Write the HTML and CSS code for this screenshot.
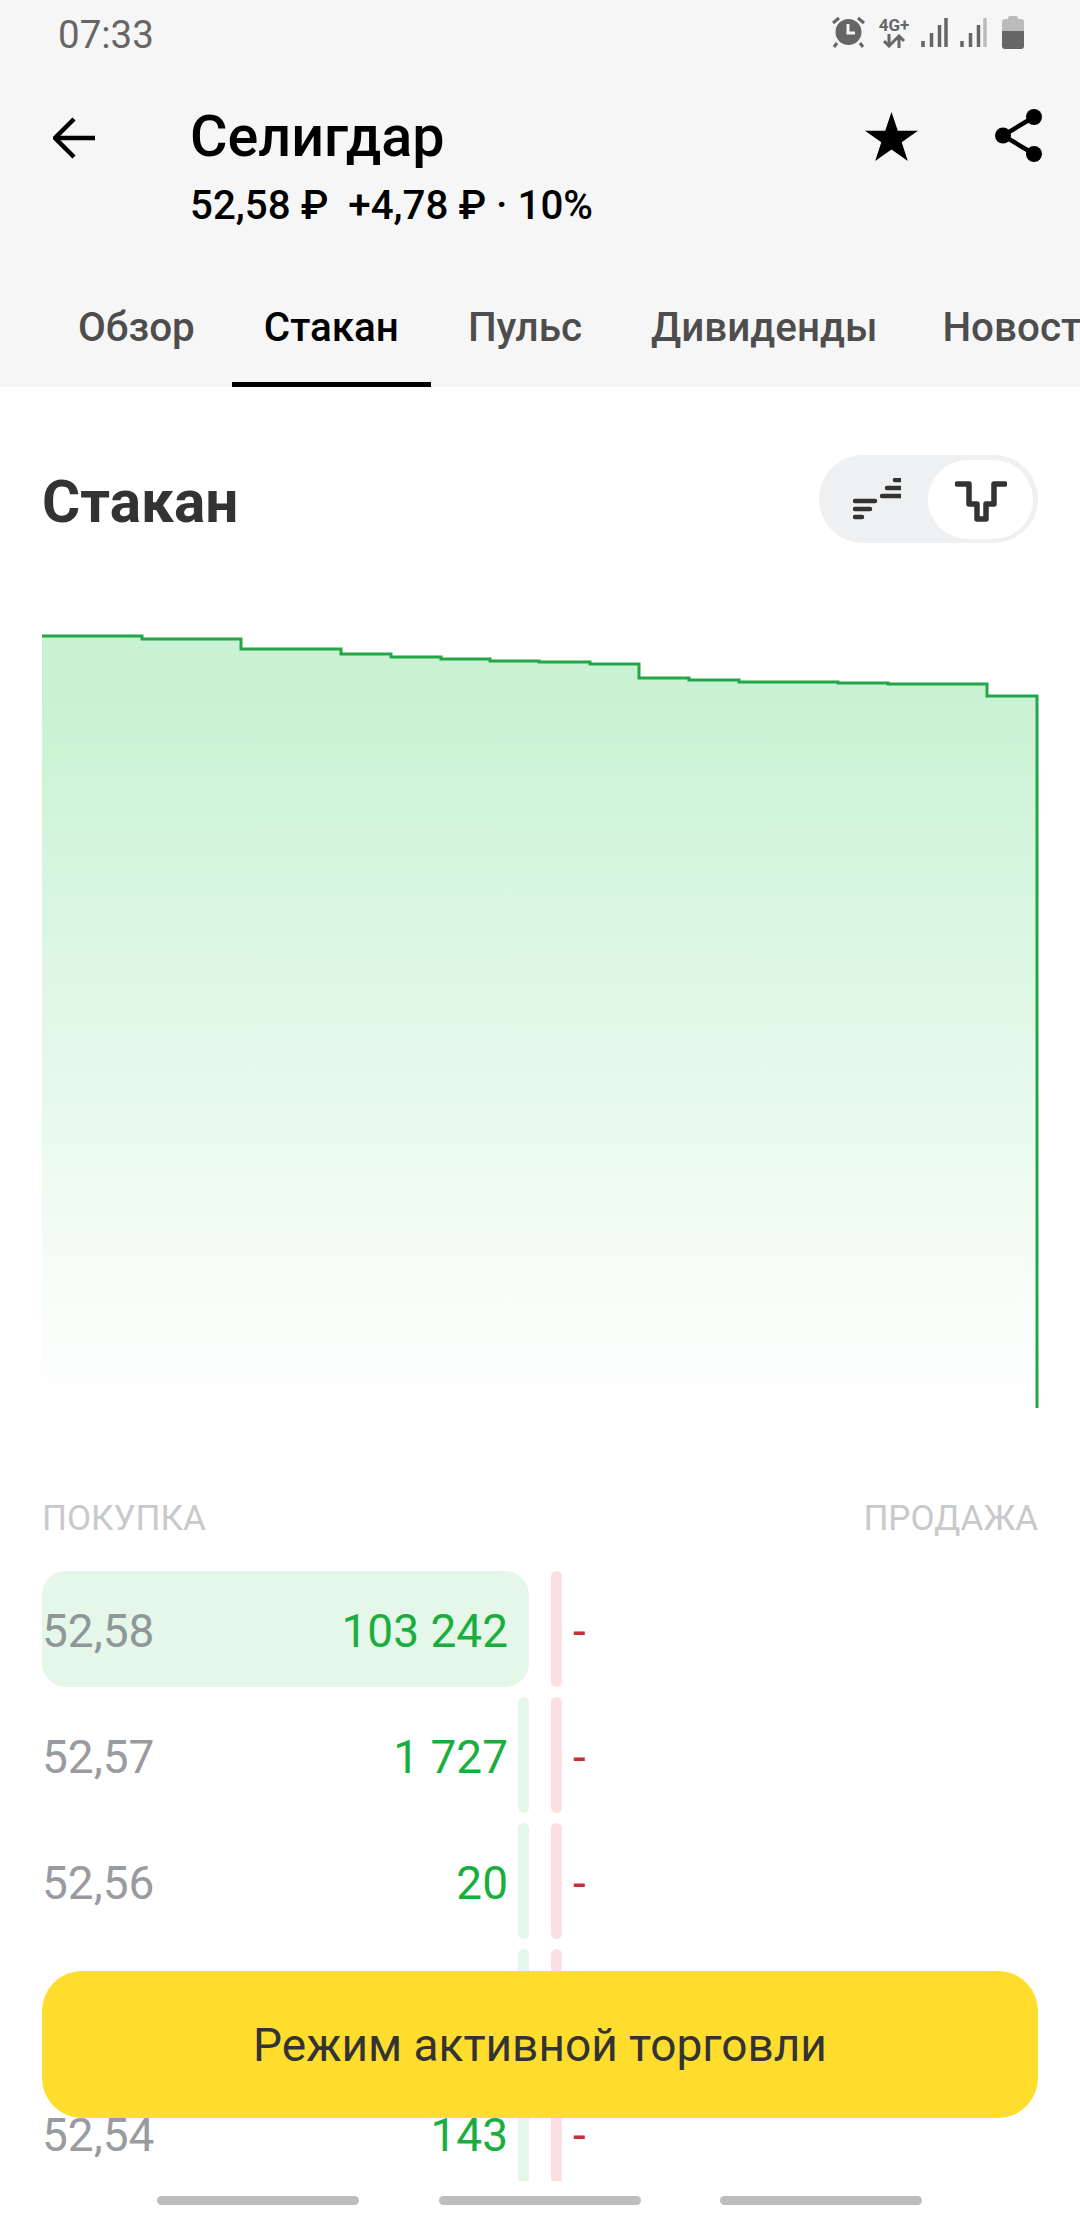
FILE: index.html
```html
<!DOCTYPE html>
<html lang="ru">
<head>
  <meta charset="UTF-8" />
  <meta name="viewport" content="width=device-width, initial-scale=1.0"/>
  <title>Селигдар</title>

  <link rel="stylesheet" href="styles.css">
</head>

<body>
  <div class="app">
    <header class="header">
      <div class="statusBar">
        <span class="time">07:33</span>
        <div class="statusIcons">
          <svg class="alarm" width="33" height="32" viewBox="0 0 33 32">
            <circle cx="16.5" cy="16" r="13" fill="#666"/>
            <path d="M16 8v9h7" fill="none" stroke="#f6f6f6" stroke-width="3"/>
            <path d="M1 7l6-5M32 7l-6-5M5 27l-3 4M28 27l3 4" fill="none" stroke="#666" stroke-width="3"/>
          </svg>
          <div class="network">
            <span class="networkLabel">4G+</span>
            <svg width="24" height="14" viewBox="0 0 24 14">
              <path d="M7 0v12M2 7l5 5 5-5M17 14V2M12 7l5-5 5 5" fill="none" stroke="#666" stroke-width="3"/>
            </svg>
          </div>
          <svg width="27" height="30" viewBox="0 0 27 30">
            <path d="M2 30v-6M10.500 30V16M18.500 30V8M25 30V1" fill="none" stroke="#666" stroke-width="3.500"/>
          </svg>
          <svg width="27" height="30" viewBox="0 0 27 30">
            <path d="M2 30v-6M10.500 30V16M18.500 30V8" fill="none" stroke="#666" stroke-width="3.500"/>
            <path d="M25 30V1" fill="none" stroke="#bbb" stroke-width="3.500"/>
          </svg>
          <svg class="battery" width="22" height="33" viewBox="0 0 22 33">
            <path d="M6 3q0-3 2-3h6q2 0 2 3h3q3 0 3 3v9H0V6q0-3 3-3z" fill="#bbb"/>
            <path d="M0 15h22v15q0 3-3 3H3q-3 0-3-3z" fill="#666"/>
          </svg>
        </div>
      </div>

      <div class="titleRow">
        <svg class="backIcon" width="42" height="42" viewBox="0 0 42 42">
          <path d="M42 21H3M21 2L2 21l19 19" fill="none" stroke="#000" stroke-width="4.500"/>
        </svg>
        <div class="titleText">
          <h1 class="title">Селигдар</h1>
          <div class="subtitle">52,58 ₽&nbsp; +4,78 ₽ · 10%</div>
        </div>
        <svg class="starIcon" width="53" height="49" viewBox="0 0 53 49">
          <path d="M26.500 0l6.300 18.700H53L36.700 30.300 42.800 49 26.500 37.500 10.200 49l6.100-18.700L0 18.700h20.200z" fill="#000"/>
        </svg>
        <svg class="shareIcon" width="47" height="53" viewBox="0 0 47 53">
          <circle cx="39" cy="8" r="8"/>
          <circle cx="8" cy="26.500" r="8"/>
          <circle cx="39" cy="45" r="8"/>
          <path d="M39 8L8 26.500 39 45" fill="none" stroke="#000" stroke-width="4.500"/>
        </svg>
      </div>

      <nav class="tabs">
        <a class="tab">Обзор</a>
        <a class="tab tabActive">Стакан</a>
        <a class="tab">Пульс</a>
        <a class="tab">Дивиденды</a>
        <a class="tab tabLast">Новости</a>
      </nav>
    </header>

    <main class="content">
      <div class="sectionHead">
        <h2 class="sectionTitle">Стакан</h2>
        <div class="toggle">
          <span class="toggleItem">
            <svg class="depthIcon" width="48" height="42" viewBox="0 0 48 42">
              <path d="M2 23h20M2 31h15M2 39h7M29 18h20M34 10h15M42 2h7" fill="none" stroke="#333" stroke-width="4.500" stroke-linecap="round"/>
            </svg>
          </span>
          <span class="toggleItem toggleKnob">
            <svg class="chartIcon" width="52" height="41" viewBox="0 0 52 41">
              <path d="M2 3h12v20h8v15h9V23h8V3h11" fill="none" stroke="#333" stroke-width="5.500" stroke-linecap="round" stroke-linejoin="round"/>
            </svg>
          </span>
        </div>
      </div>

      <svg class="chart" width="997" height="780" viewBox="0 0 997 780">
        <defs>
          <linearGradient id="depthFill" x1="0" y1="0" x2="0" y2="1">
            <stop offset="0.07" stop-color="#c8f2d3"/>
            <stop offset="1" stop-color="#ffffff"/>
          </linearGradient>
        </defs>
        <path fill="url(#depthFill)" d="M0 6H100V9H199V19H299V24H349V27H399V29H448V31H497V32H548V34H597V48H647V50H697V52H796V53H846V54H945V66H995V778H0Z"/>
        <path fill="none" stroke="#24a648" stroke-width="3" d="M0 6H100V9H199V19H299V24H349V27H399V29H448V31H497V32H548V34H597V48H647V50H697V52H796V53H846V54H945V66H995V778"/>
      </svg>

      <div class="sides">
        <span>ПОКУПКА</span>
        <span>ПРОДАЖА</span>
      </div>

      <div class="book">
        <div class="row">
          <div class="buy">
            <div class="buyBar buyBarFull" style="width: 100%"></div>
            <span class="price priceTop">52,58</span>
            <span class="volume">103 242</span>
          </div>
          <div class="sell"><div class="sellBar"></div><span class="dash">-</span></div>
        </div>
        <div class="row">
          <div class="buy">
            <div class="buyBar" style="width: 11px"></div>
            <span class="price">52,57</span>
            <span class="volume">1 727</span>
          </div>
          <div class="sell"><div class="sellBar"></div><span class="dash">-</span></div>
        </div>
        <div class="row">
          <div class="buy">
            <div class="buyBar" style="width: 11px"></div>
            <span class="price">52,56</span>
            <span class="volume">20</span>
          </div>
          <div class="sell"><div class="sellBar"></div><span class="dash">-</span></div>
        </div>
        <!-- this row sits under the button -->
        <div class="row">
          <div class="buy">
            <div class="buyBar" style="width: 11px"></div>
          </div>
          <div class="sell"><div class="sellBar"></div></div>
        </div>
        <div class="row">
          <div class="buy">
            <div class="buyBar" style="width: 11px"></div>
            <span class="price">52,54</span>
            <span class="volume">143</span>
          </div>
          <div class="sell"><div class="sellBar"></div><span class="dash">-</span></div>
        </div>
      </div>
    </main>

    <div class="navBar">
      <span class="navPill"></span>
      <span class="navPill"></span>
      <span class="navPill"></span>
    </div>

    <button type="button" class="tradeBtn">Режим активной торговли</button>
  </div>
</body>
</html>
```

FILE: styles.css
```css
* {
  box-sizing: border-box;
  margin: 0;
  padding: 0;
  font-family: Roboto, "Noto Sans", sans-serif;
}

body {
  background: #fff;
  width: 1080px;
  height: 2220px;
  overflow: hidden;
}

.app {
  position: relative;
  width: 1080px;
  height: 2220px;
  display: flex;
  flex-direction: column;
  overflow: hidden;
}

/* header */

.header {
  background: #f6f6f6;
  height: 387px;
  flex-shrink: 0;
}

.statusBar {
  height: 66px;
  padding: 0 56px 0 58px;
  display: flex;
  justify-content: space-between;
  align-items: center;
}

.time {
  font-size: 38.5px;
  margin-top: 2px;
  color: #666;
}

.statusIcons {
  display: flex;
  align-items: center;
  gap: 12px;
  margin-top: -2px;
}

.alarm {
  margin-right: 2px;
}

.network {
  width: 30px;
  display: flex;
  flex-direction: column;
  align-items: center;
}

.networkLabel {
  font-size: 17px;
  line-height: 17px;
  font-weight: 700;
  color: #666;
}

.battery {
  margin-left: 3px;
}

.titleRow {
  display: flex;
  align-items: flex-start;
  height: 135px;
  padding-top: 39px;
  padding-left: 53px;
}

.backIcon {
  margin-top: 12px;
  margin-right: 95px;
}

.titleText {
  flex: 1;
}

.title {
  font-size: 57.5px;
  line-height: 64px;
  font-weight: 500;
  color: #000;
}

.subtitle {
  margin-top: 15px;
  font-size: 40.3px;
  line-height: 44px;
  font-weight: 500;
  color: #000;
}

.starIcon {
  margin-top: 7px;
  margin-right: 77px;
}

.shareIcon {
  margin-top: 4px;
  margin-right: 38px;
}

.tabs {
  display: flex;
  gap: 5px;
  height: 83px;
  margin-top: 103px;
  padding-left: 46px;
  white-space: nowrap;
}

.tab {
  height: 83px;
  padding: 0 32px;
  font-size: 40.4px;
  line-height: 47px;
  font-weight: 500;
  color: #4d4d4d;
}

.tabActive {
  color: #000;
  border-bottom: 5px solid #000;
}

.tabLast {
  margin-left: -4px;
}

/* section */

.content {
  flex: 1;
  min-height: 0;
  padding: 68px 42px 0 42px;
  display: flex;
  flex-direction: column;
}

.sectionHead {
  display: flex;
  justify-content: space-between;
  align-items: center;
  height: 88px;
}

.sectionTitle {
  padding-top: 5px;
  font-size: 58.5px;
  font-weight: 700;
  color: #333;
}

.toggle {
  width: 219px;
  height: 88px;
  padding: 5px;
  display: flex;
  align-items: center;
  background: #eff0f1;
  border-radius: 44px;
}

.toggleItem {
  flex: 1;
  height: 79px;
  display: flex;
  justify-content: center;
  align-items: center;
}

.toggleKnob {
  flex: none;
  width: 105px;
  background: #fff;
  border-radius: 40px;
}

.depthIcon {
  margin-left: 2px;
}

.chartIcon {
  margin-top: 5px;
}

.chart {
  display: block;
  margin-top: 87px;
  flex-shrink: 0;
}

.sides {
  margin-top: 89px;
  display: flex;
  justify-content: space-between;
  font-size: 35px;
  line-height: 40px;
  color: #c8c9cb;
}

/* order book */

.book {
  margin-top: 32px;
  flex: 1;
  min-height: 0;
  overflow: hidden;
  display: flex;
  flex-direction: column;
  gap: 10px;
}

.row {
  flex: none;
  height: 116px;
  display: flex;
  gap: 22px;
}

.buy {
  position: relative;
  width: 487px;
  padding: 4px 21px 0 0;
  display: flex;
  justify-content: space-between;
  align-items: center;
  font-size: 46px;
}

.buyBar {
  position: absolute;
  top: 0;
  right: 0;
  bottom: 0;
  background: #e5f7e9;
  border-radius: 6px;
}

.buyBarFull {
  border-radius: 24px;
}

.price,
.volume {
  position: relative;
}

.price {
  color: #9a9ba1;
}

.priceTop {
  color: #90979a;
}

.volume {
  color: #1aae3e;
}

.sell {
  display: flex;
  align-items: center;
  gap: 11px;
}

.sellBar {
  width: 11px;
  height: 100%;
  background: #fddfe2;
  border-radius: 6px;
}

.dash {
  padding-top: 4px;
  font-size: 46px;
  color: #c62f3c;
}

/* bottom */

.navBar {
  height: 39px;
  flex-shrink: 0;
  padding: 15px 158px 0 157px;
  display: flex;
  justify-content: space-between;
  align-items: flex-start;
  background: #fff;
}

.navPill {
  width: 202px;
  height: 9px;
  background: #bdbdbd;
  border-radius: 5px;
}

.tradeBtn {
  position: absolute;
  left: 42px;
  right: 42px;
  bottom: 102px;
  height: 147px;
  border: none;
  border-radius: 40px;
  background: #ffdd2d;
  color: #333;
  font-size: 46px;
}
```
